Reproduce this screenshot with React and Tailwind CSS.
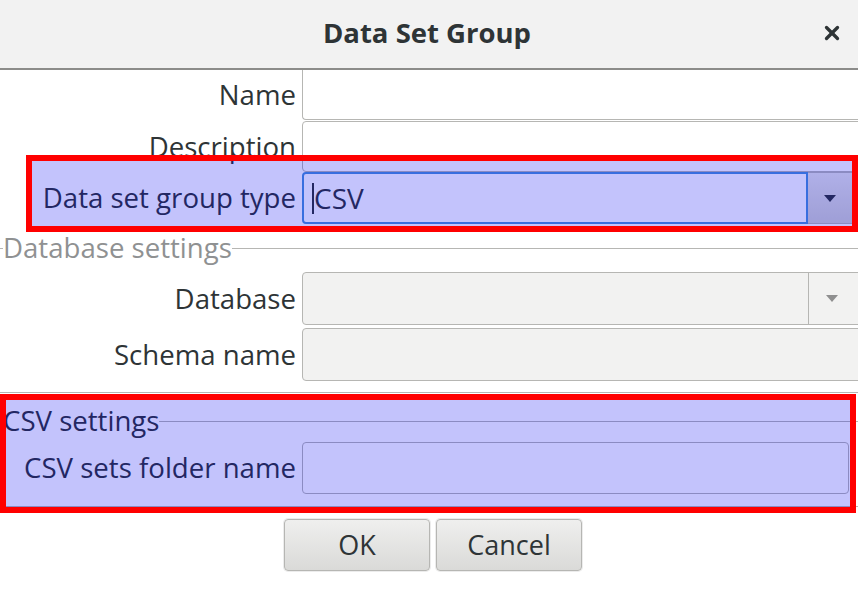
import { X } from "lucide-react";

const font = { fontFamily: '"Open Sans", "Noto Sans", sans-serif' };

function Label({ children, className = "" }) {
  return (
    <div className={`w-[302px] shrink-0 pr-[6px] text-right text-[27.6px] leading-none text-[#2e3436] ${className}`}>
      {children}
    </div>
  );
}

function Arrow({ color }) {
  return (
    <svg width="12" height="7" viewBox="0 0 12 7">
      <path d="M0 0H12L6 7Z" fill={color} />
    </svg>
  );
}

function FrameTitle({ children, muted }) {
  return (
    <div className="flex h-[32px] items-center">
      <div className="w-[3px] border-t border-[#b6b6b3]" />
      <span className={`text-[27.6px] leading-none ${muted ? "text-[#8f9192]" : "text-[#2e3436]"}`}>{children}</span>
      <div className="flex-1 border-t border-[#b6b6b3]" />
    </div>
  );
}

export default function App() {
  return (
    <div style={font} className="relative w-[858px] h-[590px] overflow-hidden bg-white">
      <div className="flex h-[70px] items-center justify-center border-b-2 border-[#8c8c8a] bg-[#f2f2f2] relative">
        <span className="text-[27.5px] font-bold text-[#2e3436] -mt-[2px] ml-[-4px]">Data Set Group</span>
        <button type="button" className="absolute right-[15px] top-[22px] text-[#2e3436]">
          <X className="w-[22px] h-[22px]" strokeWidth={3.6} />
        </button>
      </div>

      <div className="flex h-[50px] items-center">
        <Label>Name</Label>
        <div className="h-[50px] flex-1 -mr-[4px] rounded-bl-[4px] border-l border-b border-[#b6b6b3] bg-white" />
      </div>

      <div className="flex h-[52px] items-center">
        <Label className="pt-[2px]">Description</Label>
        <div className="mt-[1px] h-[51px] flex-1 -mr-[4px] rounded-l-[4px] border border-[#b6b6b3] bg-white" />
      </div>

      <div className="flex h-[52px] items-center">
        <Label>Data set group type</Label>
        <div className="flex h-[52px] flex-1 mr-[6px]">
          <div className="flex flex-1 items-center rounded-l-[4px] border-2 border-[#4a90d9] bg-white pl-[8px]">
            <div className="h-[31px] w-[2px] bg-[#2e3436]" />
            <span className="text-[28px] leading-none text-[#2e3436]">CSV</span>
          </div>
          <div className="flex w-[44px] items-center justify-center border-y border-[#b6b6b3] bg-gradient-to-b from-[#e6e6e5] to-[#d0d0ce]">
            <Arrow color="#2e3436" />
          </div>
        </div>
      </div>

      <div className="mt-[8px]">
        <FrameTitle muted>Database settings</FrameTitle>
      </div>

      <div className="mt-[8px] flex h-[53px] items-center">
        <Label>Database</Label>
        <div className="flex h-[53px] flex-1 -mr-[4px] rounded-l-[4px] border border-[#b6b6b3] bg-[#f2f2f1]">
          <div className="flex-1" />
          <div className="flex w-[53px] items-center justify-center border-l border-[#b6b6b3] pr-[6px]">
            <Arrow color="#8f8f8f" />
          </div>
        </div>
      </div>

      <div className="mt-[3px] flex h-[53px] items-center">
        <Label>Schema name</Label>
        <div className="h-[53px] flex-1 -mr-[4px] rounded-l-[4px] border border-[#b6b6b3] bg-[#f2f2f1]" />
      </div>

      <div className="mt-[11px] border-t border-[#b6b6b3]" />

      <div className="mt-[12px]">
        <FrameTitle>CSV settings</FrameTitle>
      </div>

      <div className="mt-[5px] flex h-[52px] items-center">
        <Label>CSV sets folder name</Label>
        <div className="h-[52px] flex-1 mr-[9px] rounded-[4px] border border-[#b6b6b3] bg-white" />
      </div>

      <div className="mt-[12px] border-t border-[#b6b6b3]" />

      <div className="mt-[12px] flex justify-center gap-[6px] pl-[8px]">
        {["OK", "Cancel"].map((t) => (
          <button
            key={t}
            type="button"
            className="h-[52px] w-[146px] rounded-[4px] border border-[#b6b6b3] bg-gradient-to-b from-[#efefee] to-[#dadad8] text-[27px] text-[#2e3436] shadow-[0_0_0_1px_#ececec]"
          >
            {t}
          </button>
        ))}
      </div>

      <div className="pointer-events-none absolute left-[26px] top-[155px] h-[77px] w-[832px] border-[6px] border-[#ff0000] bg-[rgba(0,0,242,0.235)]" />
      <div className="pointer-events-none absolute left-0 top-[394px] h-[119px] w-[856px] border-[6px] border-[#ff0000] bg-[rgba(0,0,242,0.235)]" />
    </div>
  );
}
